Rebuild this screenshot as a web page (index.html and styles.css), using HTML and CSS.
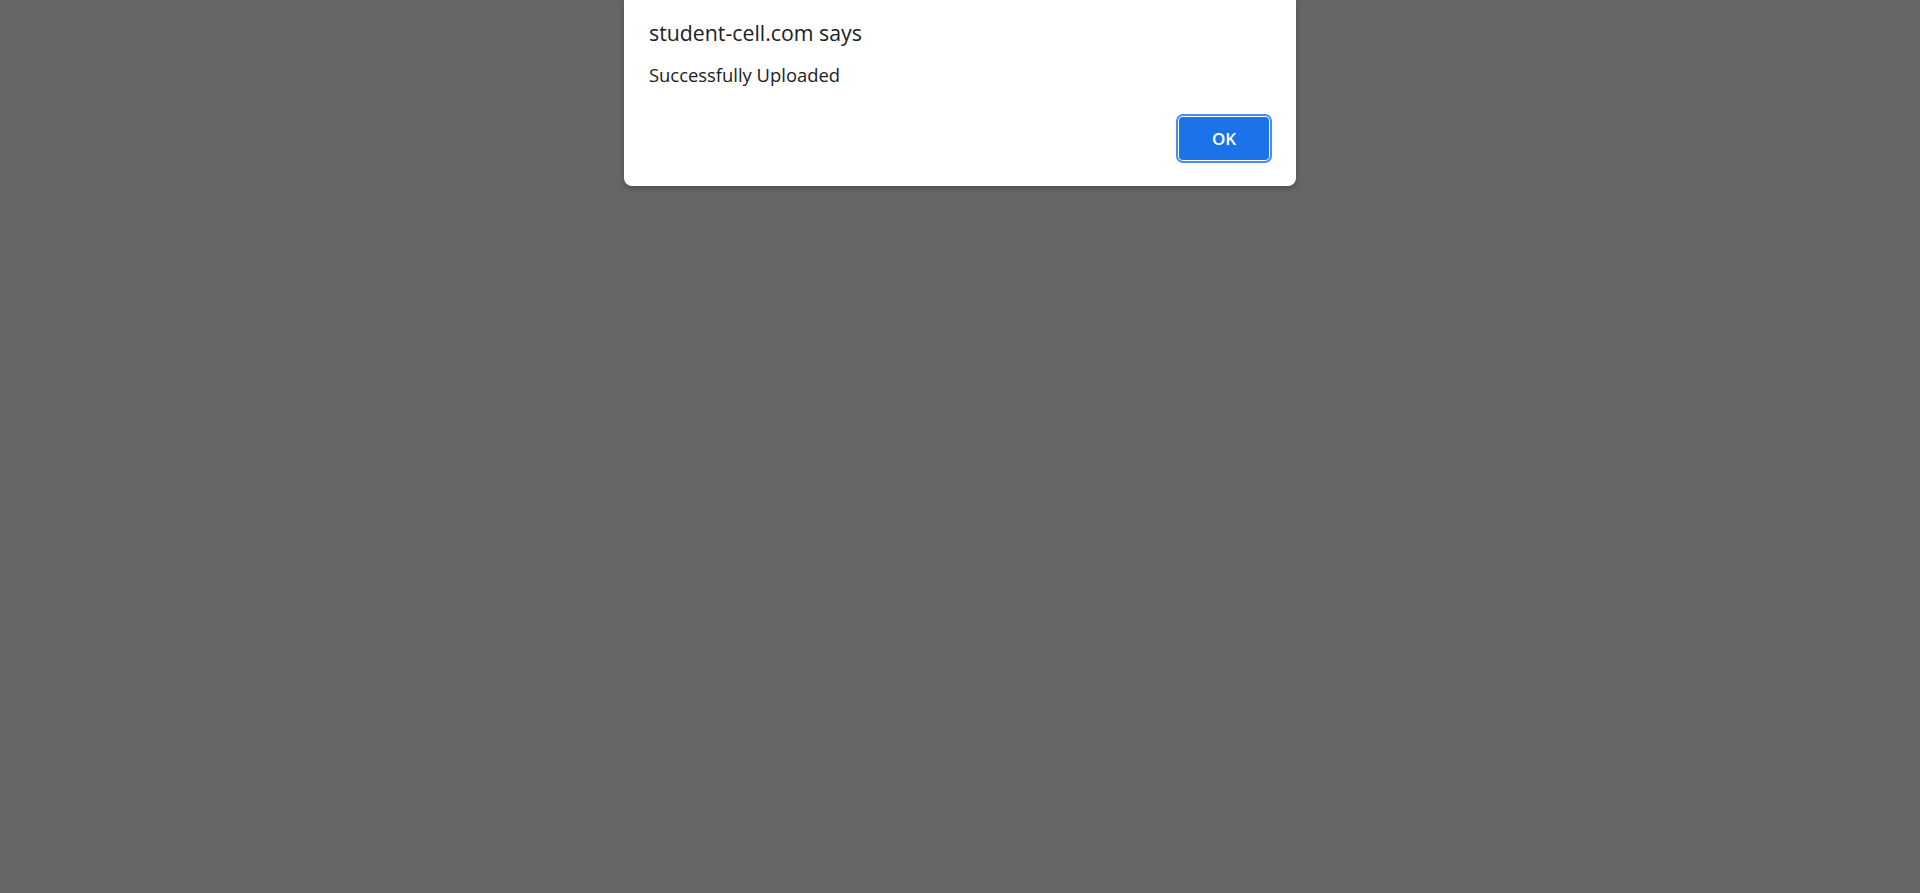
FILE: index.html
```html
<!DOCTYPE html>
<html lang="en">
<head>
<meta charset="utf-8">
<title>student-cell.com says</title>
<link rel="stylesheet" href="styles.css">
</head>
<body>
<div class="overlay">
  <div class="dialog" role="alertdialog">
    <div class="title">student-cell.com says</div>
    <div class="message">Successfully Uploaded</div>
    <div class="actions">
      <button class="ok" type="button">OK</button>
    </div>
  </div>
</div>
</body>
</html>
```
FILE: styles.css
```css
html, body {
  margin: 0;
  padding: 0;
  height: 100%;
}
body {
  background: #666666;
  font-family: "Open Sans", "Noto Sans", "Liberation Sans", sans-serif;
  color: #202124;
}
.overlay {
  display: flex;
  justify-content: center;
  align-items: flex-start;
  height: 100%;
}
.dialog {
  width: 672px;
  box-sizing: border-box;
  background: #ffffff;
  border-radius: 0 0 8px 8px;
  box-shadow: 0 2px 6px rgba(0, 0, 0, 0.25);
  padding: 19px 27px 26px 25px;
  display: flex;
  flex-direction: column;
}
.title {
  font-size: 21.3px;
  line-height: 28px;
  color: #202124;
}
.message {
  margin-top: 16px;
  font-size: 18.4px;
  line-height: 24px;
  color: #202124;
}
.actions {
  display: flex;
  justify-content: flex-end;
  margin-top: 30px;
}
.ok {
  width: 90px;
  height: 43px;
  border: none;
  border-radius: 4px;
  background: #1a73e8;
  color: #ffffff;
  font-family: "Open Sans", "Noto Sans", "Liberation Sans", sans-serif;
  font-size: 17px;
  font-weight: 600;
  box-shadow: 0 0 0 1px #ffffff, 0 0 0 3px #4a8af4;
  cursor: pointer;
}
```
